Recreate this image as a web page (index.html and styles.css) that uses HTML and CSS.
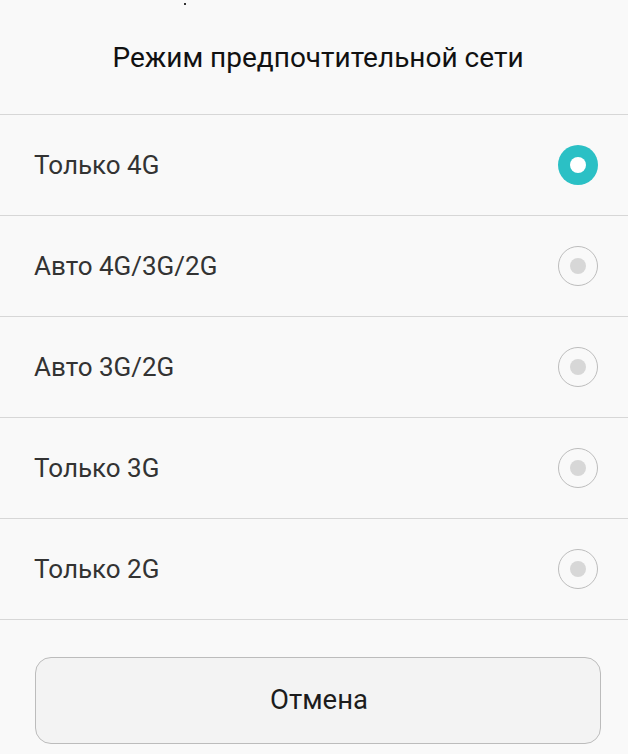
FILE: index.html
```html
<!DOCTYPE html>
<html lang="ru">
<head>
<meta charset="utf-8">
<link rel="stylesheet" href="styles.css">
</head>
<body>
<div class="dialog">
  <div class="title">Режим предпочтительной сети</div>
  <ul class="list">
    <li class="row"><span class="label">Только 4G</span><span class="radio checked"></span></li>
    <li class="row"><span class="label">Авто 4G/3G/2G</span><span class="radio"></span></li>
    <li class="row"><span class="label">Авто 3G/2G</span><span class="radio"></span></li>
    <li class="row"><span class="label">Только 3G</span><span class="radio"></span></li>
    <li class="row"><span class="label">Только 2G</span><span class="radio"></span></li>
  </ul>
  <div class="actions">
    <button class="cancel">Отмена</button>
  </div>
</div>
</body>
</html>
```
FILE: styles.css
```css
html, body {
  margin: 0;
  padding: 0;
  background: #f9f9f9;
}
body {
  font-family: Roboto, "Noto Sans", sans-serif;
  width: 628px;
  height: 754px;
  overflow: hidden;
}
.dialog {
  position: relative;
  display: flex;
  flex-direction: column;
}
.dialog::before {
  content: "";
  position: absolute;
  left: 184px;
  top: 3px;
  width: 2px;
  height: 2px;
  background: #333;
}
.title {
  height: 114px;
  display: flex;
  align-items: center;
  justify-content: center;
  padding-left: 8px;
  font-size: 28px;
  color: #111111;
}
.list {
  list-style: none;
  margin: 0;
  padding: 0;
  border-bottom: 1px solid #d7d7d7;
}
.row {
  height: 100px;
  border-top: 1px solid #d7d7d7;
  display: flex;
  align-items: center;
  justify-content: space-between;
  padding: 0 30px 0 34px;
}
.label {
  font-size: 26px;
  color: #333333;
}
.radio {
  width: 38px;
  height: 38px;
  border: 1px solid #bdbdbd;
  border-radius: 50%;
  display: flex;
  align-items: center;
  justify-content: center;
}
.radio::after {
  content: "";
  width: 16px;
  height: 16px;
  border-radius: 50%;
  background: #d7d7d7;
}
.radio.checked {
  width: 40px;
  height: 40px;
  border: none;
  background: #2bc0c5;
}
.radio.checked::after {
  background: #ffffff;
}
.actions {
  padding: 37px 27px 0 35px;
}
.cancel {
  width: 100%;
  height: 87px;
  border: 1px solid #bcbcbc;
  border-radius: 16px;
  background: #f3f3f3;
  font-family: Roboto, "Noto Sans", sans-serif;
  font-size: 27.5px;
  color: #1c1c1c;
  padding: 0 0 2px 2px;
}
```
